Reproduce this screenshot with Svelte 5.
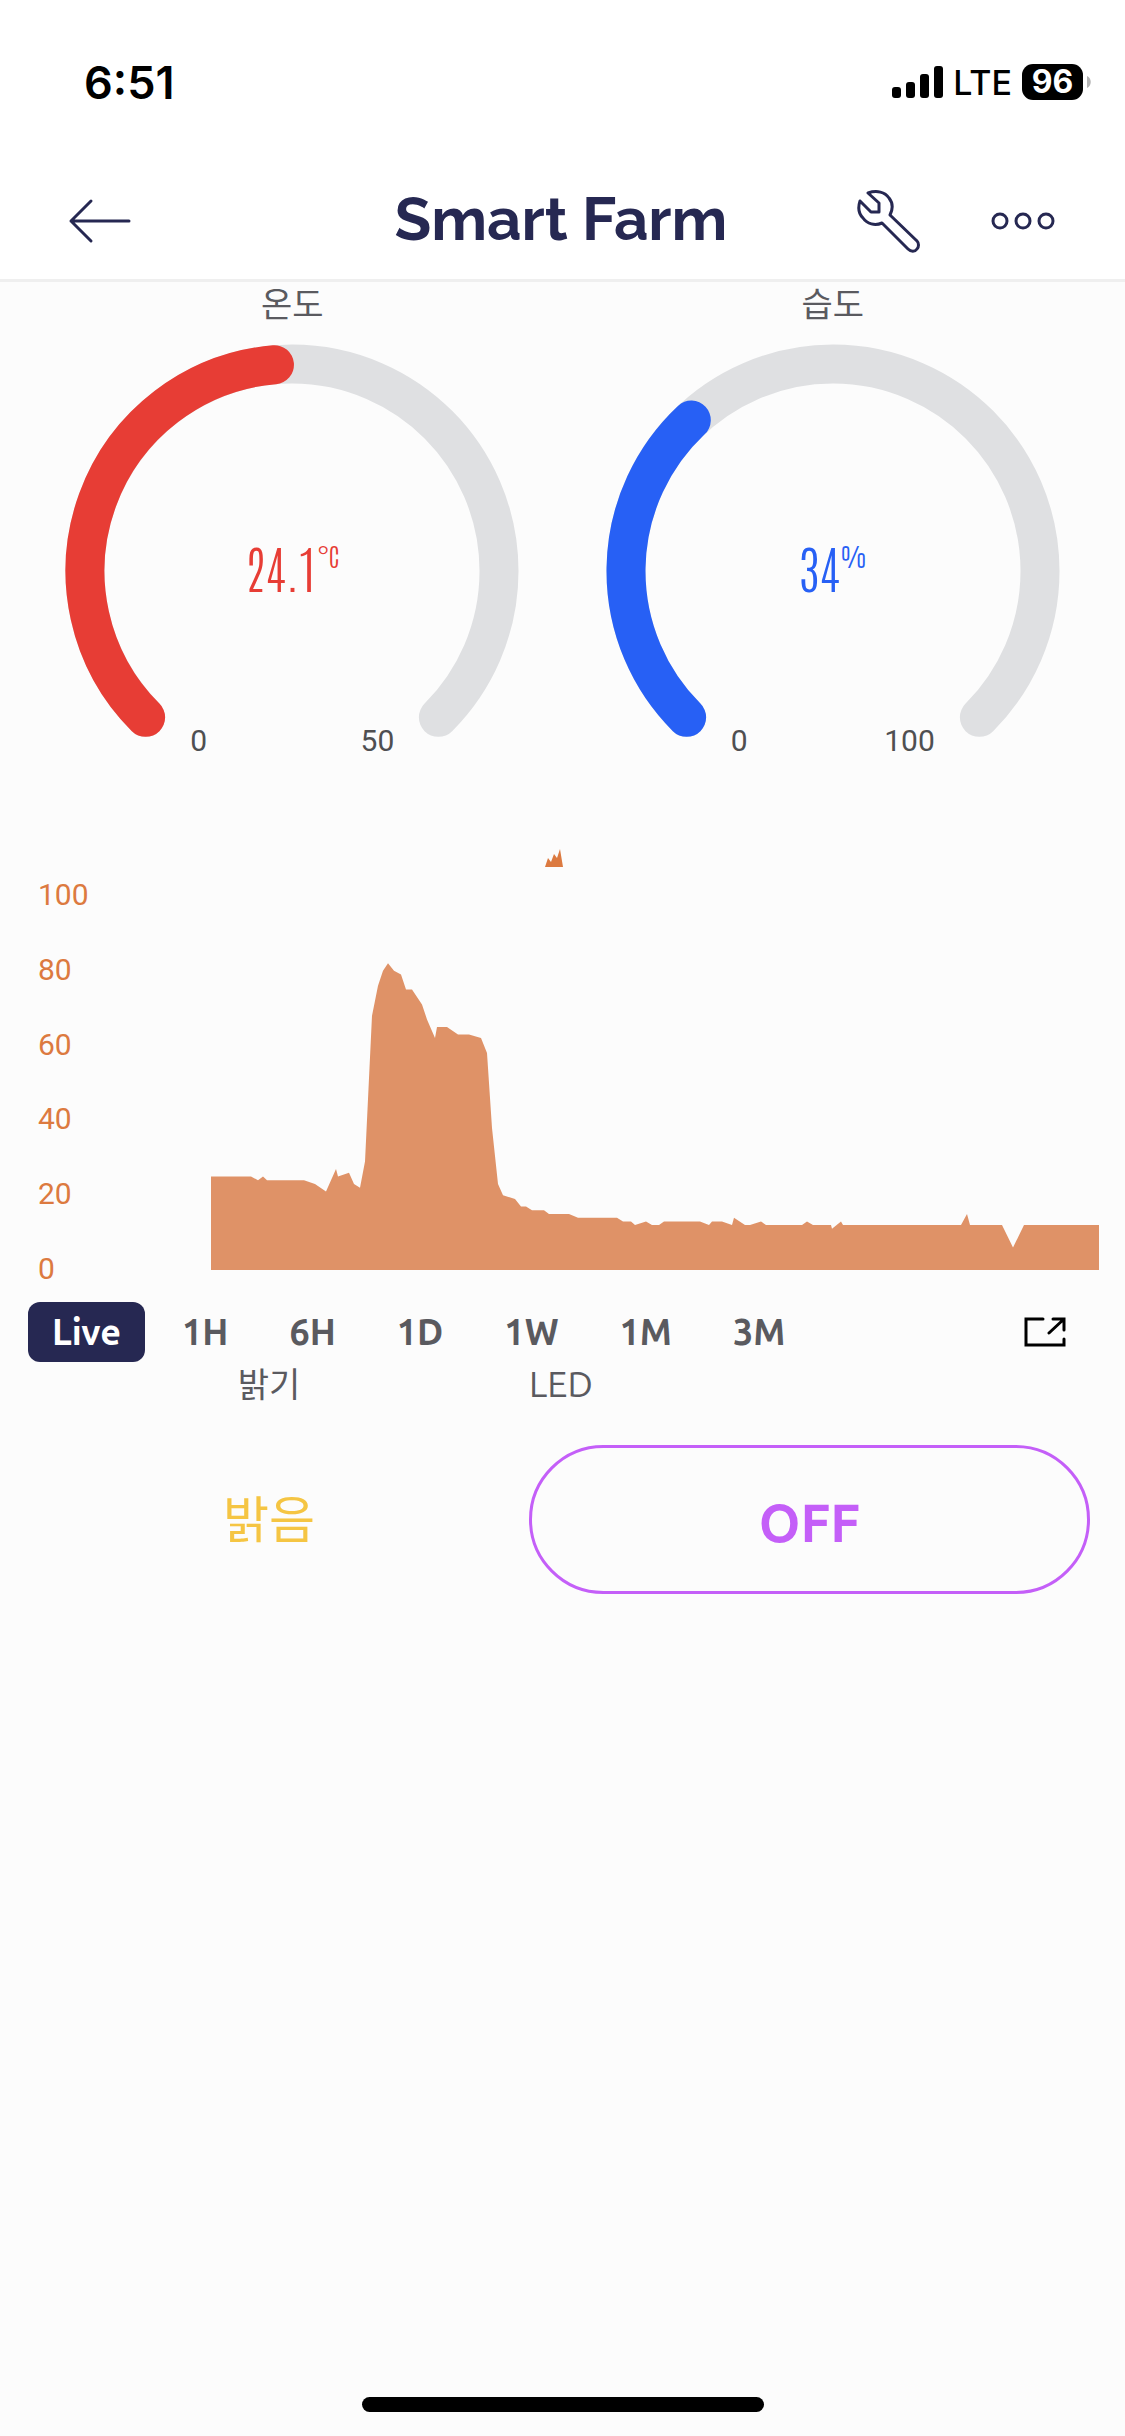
<script>
  const R = 207;
  const C = 228;

  function point(fraction) {
    const angle = ((-135 + 270 * fraction) * Math.PI) / 180;
    return [C + R * Math.sin(angle), C - R * Math.cos(angle)];
  }

  function arc(fraction) {
    const [x1, y1] = point(0);
    const [x2, y2] = point(fraction);
    const large = fraction * 270 > 180 ? 1 : 0;
    return `M${x1} ${y1}A${R} ${R} 0 ${large} 1 ${x2} ${y2}`;
  }

  const gauges = [
    { label: '온도', value: 24.1, unit: '°C', max: 50, tone: 'red' },
    { label: '습도', value: 34, unit: '%', max: 100, tone: 'blue' }
  ];

  const ticks = [100, 80, 60, 40, 20, 0];

  // [x, sensor reading] pairs; x runs from 0 to 888
  const series = [
    [0, 25], [40, 25], [47, 24], [52, 25], [56, 24], [93, 24], [104, 23], [115, 21],
    [125, 27], [127, 25], [138, 26], [143, 23], [149, 22], [154, 29], [161, 68],
    [167, 76], [172, 80], [177, 82], [183, 80], [190, 79], [195, 75], [201, 75],
    [211, 71], [216, 67], [224, 62], [226, 65], [236, 65], [247, 63], [258, 63],
    [270, 62], [276, 58], [281, 38], [287, 23], [292, 20], [304, 19], [310, 17],
    [315, 17], [321, 16], [333, 16], [338, 15], [358, 15], [367, 14], [406, 14],
    [412, 13], [420, 13], [424, 12], [435, 13], [441, 12], [448, 12], [453, 13],
    [489, 13], [498, 12], [501, 13], [511, 13], [521, 12], [523, 14], [534, 12],
    [539, 12], [550, 13], [555, 12], [591, 12], [596, 13], [602, 12], [620, 12],
    [621, 11], [630, 13], [632, 12], [750, 12], [756, 15], [759, 12], [791, 12],
    [802, 6], [813, 12], [888, 12]
  ];
  const area = `M0 100${series.map(([x, v]) => `L${x} ${100 - v}`).join('')}L888 100Z`;

  const ranges = ['Live', '1H', '6H', '1D', '1W', '1M', '3M'];
  let range = $state('Live');
  let led = $state(false);
</script>

<div class="screen">
  <div class="status">
    <time>6:51</time>
    <div class="signals">
      <svg width="51" height="32" viewBox="0 0 51 32" aria-hidden="true">
        <rect x="0" y="21" width="9" height="11" rx="3" />
        <rect x="14" y="16" width="9" height="16" rx="3" />
        <rect x="28" y="8" width="9" height="24" rx="3" />
        <rect x="42" y="0" width="9" height="32" rx="3" />
      </svg>
      <span class="network">LTE</span>
      <span class="battery">96</span>
      <svg class="nub" width="4" height="12" viewBox="0 0 4 12" aria-hidden="true">
        <path d="M0 0C5 2 5 10 0 12Z" fill="#b4b4b4" />
      </svg>
    </div>
  </div>

  <header>
    <button class="icon" aria-label="Back">
      <svg width="64" height="46" viewBox="0 0 64 46">
        <path d="M24 3L4 23L24 43M4 23H62" />
      </svg>
    </button>
    <h1>Smart Farm</h1>
    <div class="actions">
      <button class="icon" aria-label="Tools">
        <svg width="64" height="64" viewBox="0 0 64 64">
          <path d="M11 4C20 1 28 3 32 9C36 14 36 20 33 26L60 52C62 54 62 58 60 60C58 63 54 63 51 60L25 34C18 37 10 35 6 29C1 24 1 18 3 12L14 23H22V14Z" />
        </svg>
      </button>
      <button class="icon" aria-label="More">
        <svg width="64" height="18" viewBox="0 0 64 18">
          <circle cx="9" cy="9" r="7" /><circle cx="32" cy="9" r="7" /><circle cx="55" cy="9" r="7" />
        </svg>
      </button>
    </div>
  </header>

  <main>
    <section class="gauges">
      {#each gauges as g}
        <figure class={g.tone}>
          <figcaption>{g.label}</figcaption>
          <div class="dial">
            <svg viewBox="0 0 456 400" aria-hidden="true">
              <path class="track" d={arc(1)} />
              <path class="fill" d={arc(g.value / g.max)} />
            </svg>
            <p class="reading">{g.value}<span>{g.unit}</span></p>
          </div>
          <div class="limits"><span>0</span><span>{g.max}</span></div>
        </figure>
      {/each}
    </section>

    <section class="history">
      <div class="legend">
        <svg width="18" height="18" viewBox="0 0 18 18" aria-hidden="true">
          <path d="M0 18L3 9L6 13L9 5L12 9L15 0L18 18Z" />
        </svg>
      </div>
      <div class="plot">
        <div class="axis">
          {#each ticks as t}<span>{t}</span>{/each}
        </div>
        <svg class="area" viewBox="0 0 888 100" preserveAspectRatio="none" role="img" aria-label="History">
          <path d={area} />
        </svg>
      </div>
      <nav>
        {#each ranges as r}
          <button class:active={range === r} onclick={() => (range = r)}>{r}</button>
        {/each}
        <button class="expand" aria-label="Expand">
          <svg width="42" height="30" viewBox="0 0 42 30">
            <path d="M19 2H2V28H40V22M29 2H40V13M40 2L25 16" />
          </svg>
        </button>
      </nav>
    </section>

    <section class="controls">
      <div class="light">
        <h2>밝기</h2>
        <p>밝음</p>
      </div>
      <div class="led">
        <h2 id="led-label">LED</h2>
        <button aria-labelledby="led-label" aria-pressed={led} onclick={() => (led = !led)}>{led ? 'ON' : 'OFF'}</button>
      </div>
    </section>
  </main>

  <div class="home"></div>
</div>

<style>
  :global(body) {
    background: #fcfcfc;
  }
  .screen {
    display: flex;
    flex-direction: column;
    min-height: 100vh;
    font-family: Ubuntu, 'Noto Sans', 'Noto Sans CJK KR', sans-serif;
    color: #5a5a5f;
  }
  h1, h2, p, figure {
    margin: 0;
    font-weight: 400;
  }
  svg {
    display: block;
  }
  button {
    padding: 0;
    border: 0;
    background: none;
    font: inherit;
    color: inherit;
  }
  .status {
    display: flex;
    justify-content: space-between;
    align-items: center;
    height: 164px;
    padding: 0 34px 0 84px;
    background: #fff;
    color: #000;
    font-family: Inter, sans-serif;
  }
  time {
    font-size: 45px;
    font-weight: 600;
  }
  .signals {
    display: flex;
    align-items: center;
  }
  .network {
    margin: 0 10px;
    font-size: 34px;
    font-weight: 500;
  }
  .battery {
    width: 61px;
    border-radius: 11px;
    background: #000;
    color: #fff;
    font-size: 32px;
    font-weight: 700;
    line-height: 36px;
    text-align: center;
  }
  .nub {
    margin-left: 4px;
  }
  header {
    display: grid;
    grid-template-columns: 1fr auto 1fr;
    align-items: center;
    height: 113px;
    padding: 0 70px 2px 67px;
    border-bottom: 3px solid #efefef;
    background: #fff;
    color: #262852;
  }
  h1 {
    font-family: Raleway, Inter, sans-serif;
    font-size: 60px;
    font-weight: 700;
    line-height: 64px;
    padding-bottom: 4px;
  }
  .icon svg {
    fill: none;
    stroke: currentColor;
    stroke-width: 3;
    stroke-linecap: round;
    stroke-linejoin: round;
  }
  .actions {
    display: flex;
    justify-content: flex-end;
    align-items: center;
    gap: 70px;
  }
  .gauges {
    display: grid;
    grid-template-columns: 1fr 1fr;
    padding: 0 22px;
  }
  figure {
    display: flex;
    flex-direction: column;
    align-items: center;
  }
  .red {
    color: #e73d35;
  }
  .blue {
    color: #2760f5;
  }
  figcaption {
    color: #5a5a5f;
    font-size: 34px;
    line-height: 44px;
    margin-bottom: 17px;
  }
  .dial {
    display: grid;
    width: 456px;
    max-width: 100%;
  }
  .dial > * {
    grid-area: 1 / 1;
  }
  .dial path {
    fill: none;
    stroke-width: 39;
    stroke-linecap: round;
  }
  .track {
    stroke: #dfe0e2;
  }
  .fill {
    stroke: currentColor;
  }
  .reading {
    display: flex;
    justify-content: center;
    align-items: flex-start;
    padding-top: 191px;
    font-family: Antonio, 'Roboto Condensed', Roboto, sans-serif;
    font-size: 51px;
    font-weight: 100;
    line-height: 64px;
  }
  .reading span {
    font-size: 26px;
    line-height: 42px;
  }
  .limits {
    display: flex;
    justify-content: space-between;
    width: 204px;
    margin-top: -20px;
    color: #4f4f51;
    font-family: Roboto, sans-serif;
    font-size: 30px;
    line-height: 36px;
  }
  .history {
    padding-top: 90px;
  }
  .legend {
    display: flex;
    justify-content: center;
    padding-right: 18px;
    fill: #dc7a40;
  }
  .plot {
    display: flex;
    padding: 10px 26px 0 38px;
    height: 393px;
  }
  .axis {
    display: flex;
    flex-direction: column;
    justify-content: space-between;
    width: 173px;
    color: #dc7a40;
    font-family: Roboto, sans-serif;
    font-size: 30px;
    line-height: 36px;
    height: 410px;
  }
  .area {
    flex: 1;
    min-width: 0;
    height: 374px;
    margin-top: 19px;
    fill: #df9267;
  }
  nav {
    display: flex;
    align-items: center;
    gap: 13px;
    margin-top: 32px;
    padding: 0 59px 0 28px;
    font-size: 36px;
    font-weight: 600;
    line-height: 60px;
  }
  nav button {
    padding: 0 24px;
    border-radius: 12px;
  }
  nav .active {
    background: #262852;
    color: #fff;
  }
  nav .expand {
    margin-left: auto;
    padding: 0;
  }
  .expand svg {
    fill: none;
    stroke: #000;
    stroke-width: 3;
    stroke-linecap: round;
  }
  .controls {
    display: grid;
    grid-template-columns: 480fr 561fr;
    column-gap: 20px;
    padding: 0 35px 0 29px;
  }
  h2 {
    font-size: 36px;
    line-height: 44px;
    margin-bottom: 39px;
  }
  .light {
    text-align: center;
  }
  .light h2 {
    font-size: 34px;
  }
  .light p {
    color: #f5c543;
    font-size: 50px;
    line-height: 149px;
  }
  .led button {
    width: 100%;
    padding-top: 6px;
    border: 3px solid #c45ff8;
    border-radius: 75px;
    color: #c45ff8;
    font-size: 53px;
    font-weight: 600;
    line-height: 137px;
  }
  .home {
    width: 402px;
    height: 15px;
    margin: auto auto 24px;
    border-radius: 8px;
    background: #000;
  }
</style>
